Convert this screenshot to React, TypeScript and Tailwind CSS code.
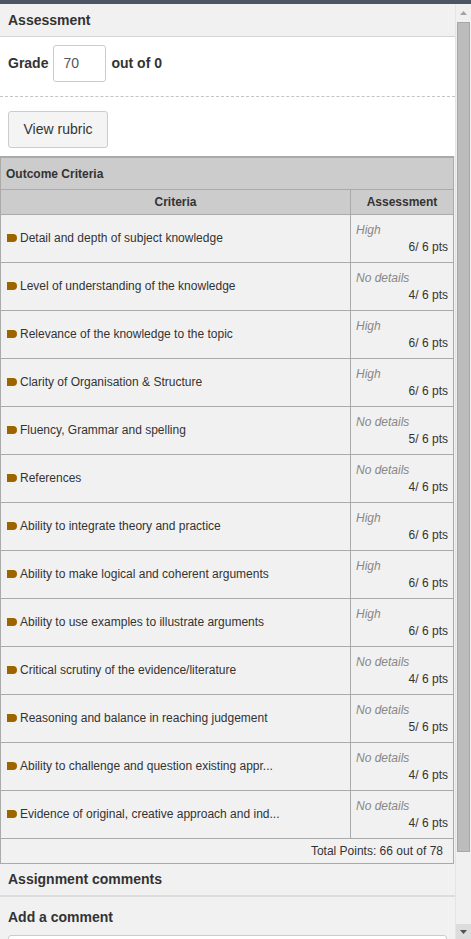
import React from "react";

interface CriterionRow {
    name: string;
    level: string;
    score: number;
    max: number;
}

const rows: CriterionRow[] = [
    { name: "Detail and depth of subject knowledge", level: "High", score: 6, max: 6 },
    { name: "Level of understanding of the knowledge", level: "No details", score: 4, max: 6 },
    { name: "Relevance of the knowledge to the topic", level: "High", score: 6, max: 6 },
    { name: "Clarity of Organisation & Structure", level: "High", score: 6, max: 6 },
    { name: "Fluency, Grammar and spelling", level: "No details", score: 5, max: 6 },
    { name: "References", level: "No details", score: 4, max: 6 },
    { name: "Ability to integrate theory and practice", level: "High", score: 6, max: 6 },
    { name: "Ability to make logical and coherent arguments", level: "High", score: 6, max: 6 },
    { name: "Ability to use examples to illustrate arguments", level: "High", score: 6, max: 6 },
    { name: "Critical scrutiny of the evidence/literature", level: "No details", score: 4, max: 6 },
    { name: "Reasoning and balance in reaching judgement", level: "No details", score: 5, max: 6 },
    { name: "Ability to challenge and question existing appr...", level: "No details", score: 4, max: 6 },
    { name: "Evidence of original, creative approach and ind...", level: "No details", score: 4, max: 6 },
];

const TagIcon = () => (
    <svg width="10" height="8" viewBox="0 0 10 8" className="shrink-0">
        <path d="M0 0 H6 Q10 0 10 4 Q10 8 6 8 H0 Z" fill="#9c6500" />
    </svg>
);

const App: React.FC = () => {
    return (
        <div
            className="w-[471px] h-[939px] overflow-hidden flex flex-col bg-[#f1f1f1] text-[#333]"
            style={{ fontFamily: '"Liberation Sans", Arial, sans-serif' }}
        >
            <div className="h-[4px] bg-[#4b5563] shrink-0" />
            <div className="flex flex-1 min-h-0">
                <div className="w-[455px] flex flex-col">
                    <div className="h-[33px] px-2 flex items-center bg-[#f1f1f1] border-b border-[#d4d4d4] shrink-0">
                        <h2 className="text-[14px] font-bold">Assessment</h2>
                    </div>

                    <div className="bg-white shrink-0">
                        <div className="px-2 pt-2 pb-[14px] flex items-center gap-[5px] border-b border-dashed border-[#c4c4c4]">
                            <span className="text-[14px] font-bold">Grade</span>
                            <div className="w-[53px] h-[37px] border border-[#ccc] rounded-[3px] flex items-center pl-[9px] text-[14px] text-[#555]">
                                70
                            </div>
                            <span className="text-[14px] font-bold">out of 0</span>
                        </div>
                        <div className="px-2 pt-[14px] pb-[8px]">
                            <button className="h-[37px] w-[100px] border border-[#ccc] rounded-[3px] bg-[#f4f4f4] text-[14px] text-[#333]">
                                View rubric
                            </button>
                        </div>
                    </div>

                    <div className="w-[454px] border border-[#aaa] border-t-2 shrink-0">
                        <div className="h-[32px] bg-[#cccccc] border-b border-[#aaa] flex items-center px-[5px]">
                            <span className="text-[12px] font-bold text-[#333]">Outcome Criteria</span>
                        </div>
                        <div className="h-[25px] bg-[#cccccc] border-b border-[#aaa] flex text-[12px] font-bold text-[#333]">
                            <div className="w-[350px] border-r border-[#aaa] flex items-center justify-center">Criteria</div>
                            <div className="flex-1 flex items-center justify-center">Assessment</div>
                        </div>
                        {rows.map((row) => (
                            <div key={row.name} className="h-[48px] bg-[#f1f1f1] border-b border-[#aaa] flex text-[12px]">
                                <div className="w-[350px] border-r border-[#aaa] flex items-center gap-[3px] pl-[6px] pb-[2px]">
                                    <TagIcon />
                                    <span className="text-[#333]">{row.name}</span>
                                </div>
                                <div className="flex-1 flex flex-col pl-[5px] pr-[5px] pt-[7px] leading-[17px]">
                                    <span className="italic text-[#888]">{row.level}</span>
                                    <span className="text-right text-[#333]">
                                        {row.score}/ {row.max} pts
                                    </span>
                                </div>
                            </div>
                        ))}
                        <div className="h-[24px] bg-[#f1f1f1] flex items-center justify-end pr-[10px] text-[12px]">
                            Total Points: 66 out of 78
                        </div>
                    </div>

                    <div className="h-[33px] px-2 flex items-center border-b-2 border-[#dcdcdc] shrink-0">
                        <h3 className="text-[14px] font-bold">Assignment comments</h3>
                    </div>
                    <div className="px-2 pt-[10px] shrink-0">
                        <h4 className="text-[14px] font-bold">Add a comment</h4>
                        <div className="mt-[7px] h-[40px] bg-white border border-[#ccc] rounded-[3px]" />
                    </div>
                </div>

                <div className="w-[16px] flex flex-col bg-[#f0f0f0] border-l border-[#e4e4e4]">
                    <div className="h-[18px] flex items-center justify-center">
                        <svg width="7" height="4" viewBox="0 0 7 4">
                            <path d="M3.5 0 L7 4 H0 Z" fill="#a3a3a3" />
                        </svg>
                    </div>
                    <div className="h-[830px] mx-[1px] bg-[#bcbcbc] border border-[#a8a8a8]" />
                    <div className="flex-1" />
                    <div className="h-[15px] bg-[#dcdcdc] flex items-center justify-center">
                        <svg width="7" height="4" viewBox="0 0 7 4">
                            <path d="M0 0 H7 L3.5 4 Z" fill="#505050" />
                        </svg>
                    </div>
                </div>
            </div>
        </div>
    );
};

export default App;
